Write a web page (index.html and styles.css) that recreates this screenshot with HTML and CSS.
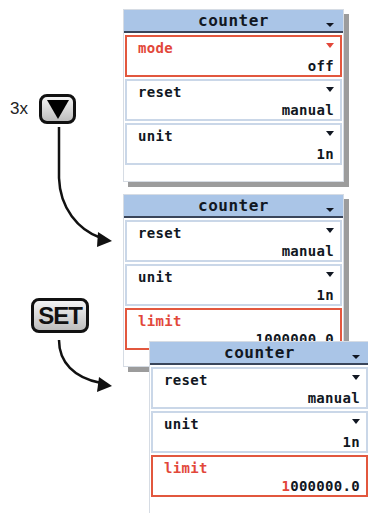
FILE: index.html
```html
<!DOCTYPE html>
<html lang="en">
<head>
  <meta charset="UTF-8">
  <meta name="viewport" content="width=device-width, initial-scale=1.0">
  <title>counter menu</title>
  <link rel="stylesheet" href="styles.css">
</head>
<body>
  <div class="page">
    <div class="notes">
      <svg class="arrows" width="123" height="513" viewBox="0 0 123 513">
        <path d="M59 127 L59 178 C60 208 78 230 101 238" fill="none" stroke="#111" stroke-width="2.5"/>
        <polygon points="112,241 98,232 97,247" fill="#111"/>
        <path d="M59 340 C59 362 74 378 101 383" fill="none" stroke="#111" stroke-width="2.5"/>
        <polygon points="112,386 99,377 97,392" fill="#111"/>
      </svg>
      <span class="times">3x</span>
      <div class="key key-down"><span class="tri"></span></div>
      <div class="key key-set">SET</div>
    </div>

    <div class="stack">
      <div class="panel">
        <div class="head"><span></span><span class="title">counter</span><span class="drop"></span></div>
        <div class="row active">
          <div class="line"><span class="label">mode</span><span class="drop"></span></div>
          <div class="value">off</div>
        </div>
        <div class="row">
          <div class="line"><span class="label">reset</span><span class="drop"></span></div>
          <div class="value">manual</div>
        </div>
        <div class="row">
          <div class="line"><span class="label">unit</span><span class="drop"></span></div>
          <div class="value">1n</div>
        </div>
        <div class="tail"></div>
      </div>

      <div class="panel second">
        <div class="head"><span></span><span class="title">counter</span><span class="drop"></span></div>
        <div class="row">
          <div class="line"><span class="label">reset</span><span class="drop"></span></div>
          <div class="value">manual</div>
        </div>
        <div class="row">
          <div class="line"><span class="label">unit</span><span class="drop"></span></div>
          <div class="value">1n</div>
        </div>
        <div class="row active">
          <div class="line"><span class="label">limit</span></div>
          <div class="value">1000000.0</div>
        </div>
        <div class="tail"></div>
      </div>

      <div class="panel third">
        <div class="head"><span></span><span class="title">counter</span><span class="drop"></span></div>
        <div class="row">
          <div class="line"><span class="label">reset</span><span class="drop"></span></div>
          <div class="value">manual</div>
        </div>
        <div class="row">
          <div class="line"><span class="label">unit</span><span class="drop"></span></div>
          <div class="value">1n</div>
        </div>
        <div class="row active">
          <div class="line"><span class="label">limit</span></div>
          <div class="value"><span class="cursor">1</span>000000.0</div>
        </div>
        <div class="tail"></div>
      </div>
    </div>
  </div>
</body>
</html>
```

FILE: styles.css
```css
body{
  margin: 0;
  width: 368px;
  height: 513px;
  overflow: hidden;
  background: #fff;
  font-family: "DejaVu Sans Mono", "Liberation Mono", monospace;
}

.page{
  display: flex;
  height: 100%;
}

.notes{
  position: relative;
  width: 123px;
  flex: none;
}

.arrows{
  position: absolute;
  left: 0;
  top: 0;
}

.times{
  position: absolute;
  left: 10px;
  top: 99px;
  font-family: "Liberation Sans", Arial, sans-serif;
  font-size: 17px;
  color: #222;
}

.key{
  position: absolute;
  box-sizing: border-box;
  border: 3px solid #111;
  border-radius: 8px;
  background: linear-gradient(#f4f4f4, #bdbdbd);
  display: flex;
  align-items: center;
  justify-content: center;
}

.key-down{
  left: 39px;
  top: 94px;
  width: 37px;
  height: 30px;
}

.key-down .tri{
  width: 0;
  height: 0;
  border-left: 11px solid transparent;
  border-right: 11px solid transparent;
  border-top: 19px solid #000;
}

.key-set{
  left: 31px;
  top: 298px;
  width: 58px;
  height: 35px;
  font-family: "Liberation Sans", Arial, sans-serif;
  font-weight: bold;
  font-size: 24px;
  letter-spacing: -1px;
  color: #111;
}

.stack{
  flex: none;
  padding-top: 9px;
}

.panel{
  position: relative;
  width: 219px;
  background: #fff;
  border: 1px solid #d6dce4;
  box-shadow: 5px 5px 0 #9c9c9c;
}

.second{
  margin-top: 12px;
}

.third{
  margin-top: -26px;
  margin-left: 26px;
}

.head{
  height: 21px;
  background: #aac5e7;
  border-bottom: 2px solid #39455a;
  display: grid;
  grid-template-columns: 1fr auto 1fr;
  align-items: center;
}

.title{
  font-weight: bold;
  font-size: 16px;
  letter-spacing: 0.5px;
  color: #111722;
}

.head .drop{
  justify-self: end;
  align-self: end;
  margin: 0 9px 4px 0;
  border-left: 4px solid transparent;
  border-right: 4px solid transparent;
  border-top: 4px solid #111722;
}

.row{
  box-sizing: border-box;
  height: 42px;
  margin: 2px 1px 0;
  border: 2px solid #cad7e8;
  padding: 3px 6px 1px 11px;
  display: flex;
  flex-direction: column;
  justify-content: space-between;
  font-weight: bold;
  font-size: 14px;
  line-height: 16px;
  letter-spacing: 0.3px;
  color: #111722;
}

.line{
  display: flex;
  justify-content: space-between;
  align-items: flex-start;
}

.row .drop{
  margin-top: 3px;
  border-left: 4px solid transparent;
  border-right: 4px solid transparent;
  border-top: 5px solid #111722;
}

.value{
  text-align: right;
}

.active{
  border-color: #e2573e;
}

.active .label,
.active .drop{
  color: #e2473a;
  border-top-color: #e2473a;
}

.cursor{
  color: #e2473a;
}

.tail{
  height: 16px;
}
```
